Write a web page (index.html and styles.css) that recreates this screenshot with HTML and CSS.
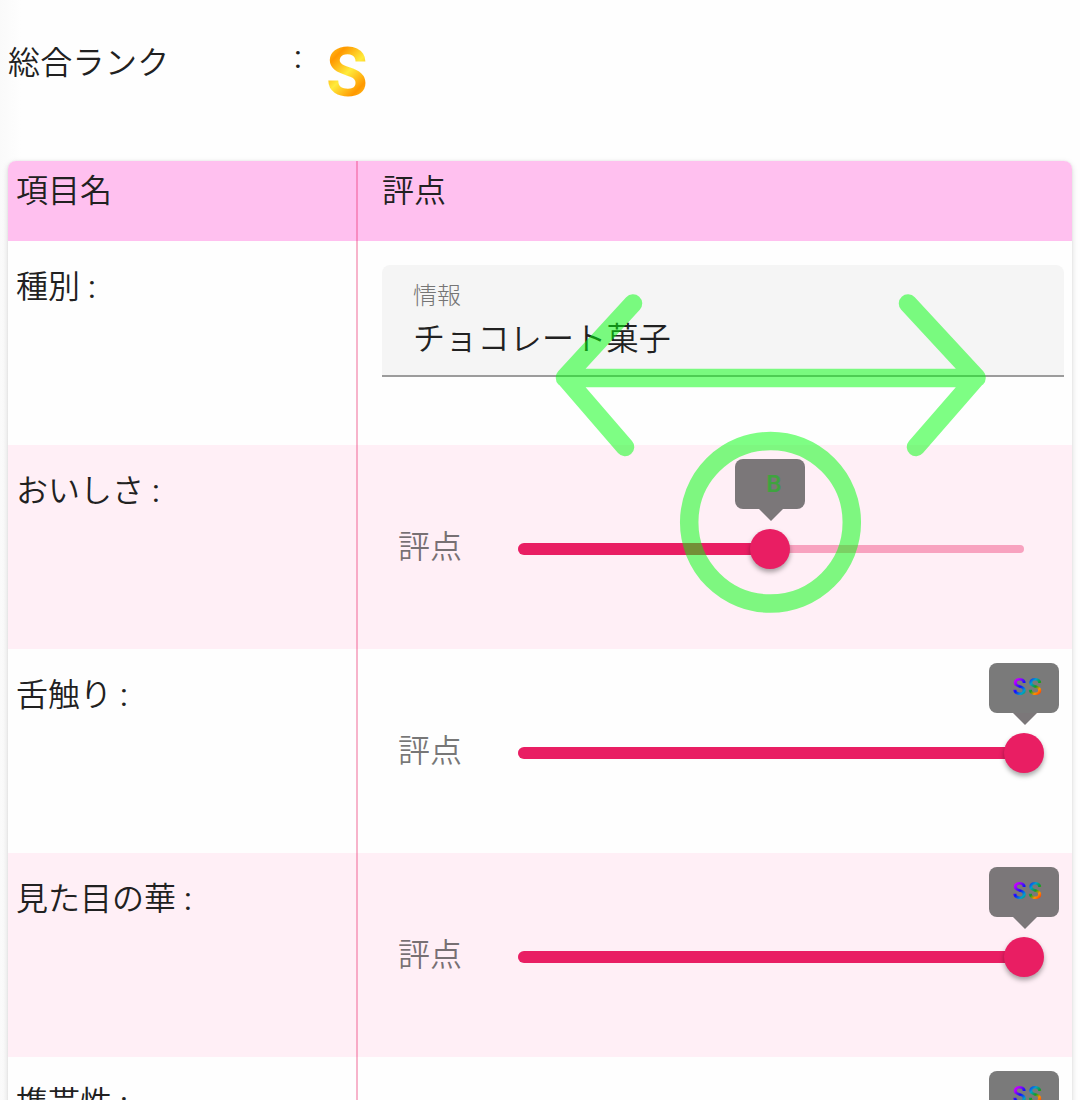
FILE: index.html
```html
<!DOCTYPE html>
<html lang="ja">
<head>
<meta charset="utf-8">
<title>評価</title>
<link rel="stylesheet" href="styles.css">
</head>
<body>
<main class="page">
  <header class="summary">
    <span class="summary-label">総合ランク</span>
    <span class="summary-colon">:</span>
    <span class="rank">S</span>
  </header>
  <section class="table">
    <div class="row head"><div class="name">項目名</div><div class="value">評点</div></div>
    <div class="row">
      <div class="name">種別<span class="colon"> :</span></div>
      <div class="value"><div class="field"><span class="field-label">情報</span><span class="field-text">チョコレート菓子</span></div></div>
    </div>
    <div class="row tinted">
      <div class="name">おいしさ<span class="colon"> :</span></div>
      <div class="value"><div class="rating"><span class="rating-label">評点</span>
        <div class="slider"><div class="fill" style="width:49.8%"></div><div class="thumb" style="left:49.8%"><div class="bubble"><span class="grade b">B</span></div></div></div></div></div>
    </div>
    <div class="row">
      <div class="name">舌触り<span class="colon"> :</span></div>
      <div class="value"><div class="rating"><span class="rating-label">評点</span>
        <div class="slider"><div class="fill" style="width:100%"></div><div class="thumb" style="left:100%"><div class="bubble"><span class="grade ss">SS</span></div></div></div></div></div>
    </div>
    <div class="row tinted">
      <div class="name">見た目の華<span class="colon"> :</span></div>
      <div class="value"><div class="rating"><span class="rating-label">評点</span>
        <div class="slider"><div class="fill" style="width:100%"></div><div class="thumb" style="left:100%"><div class="bubble"><span class="grade ss">SS</span></div></div></div></div></div>
    </div>
    <div class="row">
      <div class="name">携帯性<span class="colon"> :</span></div>
      <div class="value"><div class="rating">
        <span class="rating-label"></span>
        <div class="slider"><div class="fill" style="width:100%"></div><div class="thumb" style="left:100%"><div class="bubble"><span class="grade ss">SS</span></div></div></div></div></div>
    </div>
  </section>
  <svg class="gesture" width="1080" height="1100" viewBox="0 0 1080 1100" fill="none" stroke="#00ff0c" stroke-linecap="round" stroke-linejoin="round">
    <path stroke-width="18.5" d="M633 303.500 565 377.500 625 447M565 378H976.500M908 303.500 976.500 377.500 916 447"/>
    <circle cx="770.5" cy="522.300" r="81.300" stroke-width="18.500"/>
  </svg>
</main>
</body>
</html>
```
FILE: styles.css
```css
* { box-sizing: border-box; }
body {
  margin: 0;
  font-family: Roboto, "Noto Sans CJK JP", sans-serif;
  font-size: 32px;
  font-weight: 350;
  line-height: 48px;
  color: #212121;
  background: #fefefe;
}
.page {
  position: relative;
  height: 1100px;
  padding: 0 8px;
  overflow: hidden;
  background: linear-gradient(90deg, #fafafa, #fefefe 21px);
}
.summary { display: flex; height: 161px; padding-top: 39px; }
.summary-label { width: 286px; letter-spacing: .3px; }
.summary-colon { width: 32px; margin-top: -6px; font-weight: 400; }
.colon { font-weight: 400; }
.rank {
  height: 68px;
  font-size: 68px;
  line-height: 68px;
  font-weight: 700;
  color: transparent;
  background: linear-gradient(135deg, #ffeb3b 0%, #ff9800 25%, #ffeb3b 50%, #ff9800 75%, #ffeb3b 100%);
  background-clip: text;
  -webkit-background-clip: text;
}
.table {
  border-radius: 8px;
  background: #fefefe;
  box-shadow: 0 2px 6px rgba(0, 0, 0, .14), 0 0 2px rgba(0, 0, 0, .08);
}
.row { display: flex; height: 204px; }
.row.head { height: 80px; background: #ffc0ef; border-radius: 8px 8px 0 0; }
.tinted { background: #ffeff6; }
.name { width: 350px; padding: 22px 8px 0; border-right: 2px solid rgba(233, 30, 99, .33); }
.value { flex: 1; padding: 24px 8px 0 24px; }
.head .name, .head .value { padding-top: 6px; }
.field {
  display: flex;
  flex-direction: column;
  height: 112px;
  padding: 14px 32px 0 31px;
  background: #f5f5f5;
  border-bottom: 2px solid #9c9c9c;
  border-radius: 8px 8px 0 0;
}
.field-label { font-size: 24px; line-height: 34px; font-weight: 300; color: #757575; }
.field-text { margin-top: 2px; letter-spacing: .25px; }
.rating { display: flex; align-items: center; height: 160px; padding: 0 40px 0 16px; }
.rating-label { width: 120px; color: rgba(0, 0, 0, .54); margin-top: -4px; }
.slider {
  position: relative;
  flex: 1;
  height: 8px;
  border-radius: 4px;
  background: #f8a2bf;
}
.fill { position: absolute; left: 0; top: -2px; height: 12px; border-radius: 6px; background: #e91e63; }
.thumb {
  position: absolute;
  top: -16px;
  width: 40px;
  height: 40px;
  margin-left: -20px;
  border-radius: 50%;
  background: #e91e63;
  box-shadow: 0 3px 5px rgba(0, 0, 0, .35);
}
.bubble {
  position: absolute;
  left: -15px;
  top: -70px;
  display: flex;
  justify-content: center;
  width: 70px;
  height: 50px;
  padding-left: 8px;
  border-radius: 8px;
  background: #7b7779;
}
.row:not(.tinted) .bubble { background: #7a7a7a; }
.bubble::after {
  content: "";
  position: absolute;
  left: 24px;
  top: 50px;
  border: 12px solid transparent;
  border-top-color: #7b7779;
  border-bottom: 0;
}
.grade { height: 24px; margin-top: 13px; font-size: 24px; line-height: 24px; font-weight: 600; color: #3fa33f; }
.ss {
  font-size: 23px;
  letter-spacing: 1.5px;
  color: transparent;
  background: linear-gradient(135deg, #ff00ff 0%, #b000ff 18%, #1010ff 34%, #00a0d0 48%, #10a020 61%, #ff9000 72%, #ff2000 86%);
  background-clip: text;
  -webkit-background-clip: text;
}
.gesture { position: absolute; left: 0; top: 0; opacity: .5; }
```
